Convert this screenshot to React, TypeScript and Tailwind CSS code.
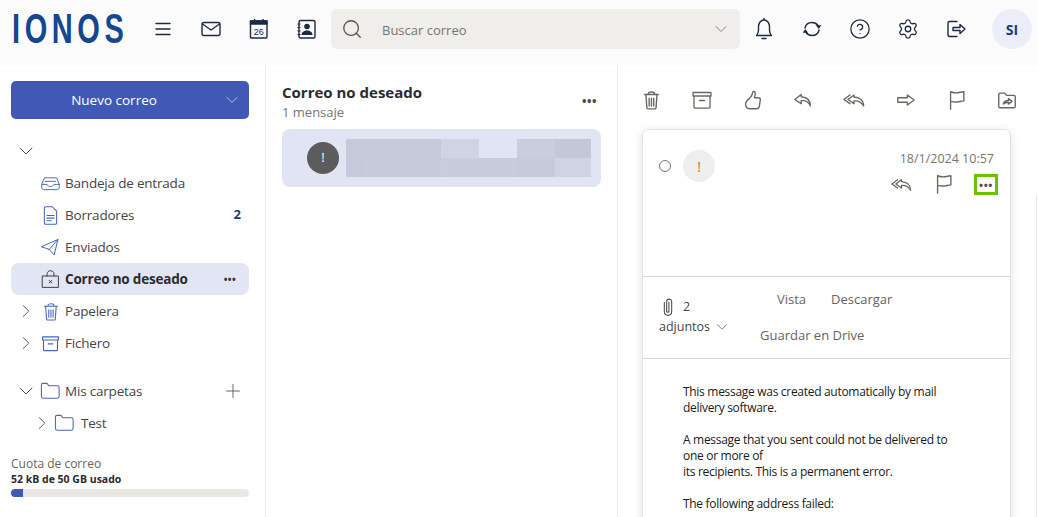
import type { ReactNode } from 'react'
import { ChevronDown, ChevronRight, Plus, Search, Settings, HelpCircle } from 'lucide-react'

const Ico = ({ size = 22, className = '', fill = 'none', sw = 1.5, children }: { size?: number; className?: string; fill?: string; sw?: number; children: ReactNode }) => (
    <svg width={size} height={size} viewBox="0 0 24 24" fill={fill} stroke="currentColor" strokeWidth={sw} strokeLinecap="round" strokeLinejoin="round" className={`shrink-0 ${className}`}>
        {children}
    </svg>
)

const Trash = ({ sw = 1.5, size = 22 }: { sw?: number; size?: number }) => (
    <Ico sw={sw} size={size}>
        <path d="M5 6h15M9 5.500c0-3 7-3 7 0M6.500 6.500l1 14c0 .8.500 1.200 1.200 1.200h7.600c.7 0 1.200-.4 1.200-1.200l1-14M10 10v8.500M12.500 10v8.500M15 10v8.500" />
    </Ico>
)
const Archive = ({ size = 24 }: { size?: number }) => (
    <Ico size={size} sw={1.300}>
        <path d="M3 4.500h18v3.500H3zM4 8v11c0 .7.500 1.200 1.200 1.200h13.600c.7 0 1.200-.5 1.200-1.200V8M9.500 12.500h5" />
    </Ico>
)
const Thumb = () => (
    <Ico>
        <path d="M8 10.500c2-2 3.500-4 3.500-6.500 0-2 3-1.800 3 .8 0 2-.7 3.200-1 4.700h4.500c1.500 0 2 1 2 2l-1 7c-.2 2-1.500 3-3 3H9c-3 0-5-2-5-5s1.500-4.500 4-6z" />
    </Ico>
)
const Reply = () => (
    <Ico>
        <path d="M10 6l-7 5.500 7 4.500v-3.200c4-.4 8 .7 10 5.700 0-6-3.500-9.500-10-10V6z" />
    </Ico>
)
const ReplyAll = ({ size = 22 }: { size?: number }) => (
    <Ico size={size}>
        <path d="M12 6.500l-6.500 5 6.500 4.500v-3c3.500-.3 7.500.7 10.500 5.500 0-6-4.500-9.500-10.500-9.800V6.500zM7.500 6.500l-6.500 5 6.500 4.500" />
    </Ico>
)
const Forward = () => (
    <Ico>
        <path d="M3 9.500h10.500V6.500l7.500 5.500-7.500 5.500v-3H3z" />
    </Ico>
)
const Flag = () => (
    <Ico>
        <path d="M5 22V3c4 1.500 7 1.500 9.500.8 2-.5 3.500-.8 5-.8v10c-2 0-3.500.5-6 1-3 .5-5.500.3-8.500-.5" />
    </Ico>
)

function Logo() {
    return (
        <div className="w-[139px] shrink-0 pl-[12px] text-[#14478f] font-['Liberation_Sans',sans-serif] font-bold text-[29px] leading-none tracking-[4.600px] scale-y-[1.45] origin-center">
            IONOS
        </div>
    )
}

function TopBar() {
    return (
        <header className="h-[65px] pb-[7px] bg-[#fbfbfb] flex items-center shrink-0 text-[#1d2a44]">
            <Logo />
            <div className="flex items-center shrink-0">
                <div className="w-[48px] flex justify-center">
                    <Ico size={24} sw={1.4}>
                        <path d="M5 6.500h14M5 12h14M5 17.500h14" />
                    </Ico>
                </div>
                <div className="w-[48px] flex justify-center">
                    <Ico size={24} sw={1.4}>
                        <rect x="3" y="5.500" width="18" height="13" rx="2" />
                        <path d="M3.500 7l8.500 6 8.500-6" />
                    </Ico>
                </div>
                <div className="w-[48px] flex justify-center">
                    <svg width="24" height="24" viewBox="0 0 24 24" fill="none" stroke="currentColor" strokeWidth="1.4">
                        <rect x="3.500" y="4" width="16.500" height="17" rx="1" />
                        <path d="M3.500 4h16.500v3H3.500z" fill="currentColor" />
                        <path d="M7.500 2v3M16 2v3" />
                        <text x="11.800" y="18" textAnchor="middle" fontSize="9" fill="currentColor" stroke="none" fontFamily="Liberation Sans, sans-serif">26</text>
                    </svg>
                </div>
                <div className="w-[48px] flex justify-center pr-[2px]">
                    <svg width="24" height="24" viewBox="0 0 24 24" fill="none" stroke="currentColor" strokeWidth="1.4">
                        <rect x="5" y="3.500" width="16" height="17.500" rx="1.500" />
                        <circle cx="13" cy="9.500" r="2.800" fill="currentColor" stroke="none" />
                        <path d="M7.500 18c0-3 2.500-4.500 5.500-4.500s5.500 1.500 5.500 4.500z" fill="currentColor" stroke="none" />
                        <path d="M3.500 7h3M3.500 10.500h3M3.500 14h3M3.500 17.500h3" strokeWidth="1.200" />
                    </svg>
                </div>
            </div>
            <div className="w-[409px] shrink-0 h-[40px] bg-[#efeeea] rounded-md flex items-center pl-[10px] pr-[9px]">
                <Search className="w-[22px] h-[22px] text-[#55524d]" strokeWidth={1.4} />
                <span className="ml-[19px] pt-[3px] flex-1 text-[13px] text-[#77746e]">Buscar correo</span>
                <ChevronDown className="w-[20px] h-[20px] text-[#77746e]" strokeWidth={1} />
            </div>
            <div className="flex items-center shrink-0">
                <div className="w-[48px] flex justify-center">
                    <Ico size={24} sw={1.4}>
                        <path d="M4.500 18.500c1.500-1.500 2-3 2-5.500V9.500c0-3.500 2.300-6.500 5.500-6.500s5.500 3 5.500 6.500V13c0 2.500.5 4 2 5.500zM12 1.500v1.500M10 21.500h4" />
                    </Ico>
                </div>
                <div className="w-[48px] flex justify-center">
                    <Ico size={24} sw={1.4}>
                        <path d="M5 11c.7-3.500 3.500-5.500 7-5.500 2.500 0 4.500 1 6 3M19 13c-.7 3.500-3.500 5.500-7 5.500-2.500 0-4.500-1-6-3" />
                        <path d="M18.800 12l-3-3.800h5.500zM5.200 12l3 3.800H2.700z" fill="currentColor" stroke="none" />
                    </Ico>
                </div>
                <div className="w-[48px] flex justify-center">
                    <HelpCircle className="w-[22px] h-[22px]" strokeWidth={1.4} />
                </div>
                <div className="w-[48px] flex justify-center">
                    <Settings className="w-[22px] h-[22px]" strokeWidth={1.4} />
                </div>
                <div className="w-[48px] flex justify-center">
                    <Ico size={24} sw={1.4}>
                        <path d="M13 4.500H5.500C4.500 4.500 4 5 4 6v12c0 1 .5 1.500 1.500 1.500H13M9 10.500h7V7.500l5 4.500-5 4.500v-3H9z" />
                    </Ico>
                </div>
            </div>
            <div className="ml-[12px] w-[40px] h-[40px] shrink-0 rounded-full bg-[#ebeef9] flex items-center justify-center text-[14px] font-bold text-[#24397c]">SI</div>
        </header>
    )
}

const FolderIco = () => (
    <Ico size={23} sw={1.100}>
        <path d="M2.500 5.500c0-1 .6-2 1.600-2h4.200l2 2.500h8.800c1 0 1.900.8 1.900 2v9c0 1.200-.8 2-2 2H4.500c-1.200 0-2-.8-2-2z" />
    </Ico>
)

function Row({ icon, label, chevron, active, right }: { icon: ReactNode; label: string; chevron?: 'right' | 'down'; active?: boolean; right?: ReactNode }) {
    return (
        <div className={`h-[32px] flex items-center rounded-lg pr-[11px] ${active ? 'bg-[#e2e5f3]' : ''}`}>
            <div className="flex justify-center w-[29px] text-[#55524d]">
                {chevron === 'right' && <ChevronRight className="w-[22px] h-[22px]" strokeWidth={1} />}
                {chevron === 'down' && <ChevronDown className="w-[24px] h-[24px]" strokeWidth={1} />}
            </div>
            <div className={`w-[20px] flex justify-center ${active ? 'text-[#37373c]' : 'text-[#4a63bb]'}`}>{icon}</div>
            <span className={`ml-[5px] flex-1 text-[13.500px] tracking-[-0.2px] ${active ? 'font-bold text-[#2b2b30]' : 'text-[#45454a]'}`}>{label}</span>
            {right}
        </div>
    )
}

function Sidebar() {
    return (
        <aside className="w-[266px] shrink-0 border-r border-[#eeeeee] pl-[11px] pr-[16px] pt-[16px] flex flex-col">
            <button className="h-[38px] rounded-[5px] bg-[#4159b4] text-white text-[13.500px] font-medium flex items-center">
                <span className="flex-1 pr-[5px] text-center">Nuevo correo</span>
                <ChevronDown className="w-[20px] h-[20px] mr-[7px] text-[#c9d2f0]" strokeWidth={1} />
            </button>
            <div className="h-[17px]" />
            <div className="h-[30px] pl-[3px] flex items-center text-[#55524d]">
                <ChevronDown className="w-[24px] h-[24px]" strokeWidth={1} />
            </div>
            <div className="h-[1px]" />
            <Row
                label="Bandeja de entrada"
                icon={
                    <Ico size={21} sw={1.100}>
                        <path d="M2 13l3-7.500h14L22 13v4c0 1.200-.8 2-2 2H4c-1.200 0-2-.8-2-2zM2 13h6c.5 1.500 2 2.500 4 2.500s3.500-1 4-2.500h6M6 9.500h12" />
                    </Ico>
                }
            />
            <Row
                label="Borradores"
                right={<span className="text-[13px] font-bold text-[#24397c] mr-[-3px]">2</span>}
                icon={
                    <Ico size={21} sw={1.200}>
                        <path d="M5 3.500c0-.8.500-1.500 1.500-1.500H14l5 5v13.500c0 .8-.5 1.500-1.500 1.500h-11c-1 0-1.500-.7-1.500-1.500zM8 12h8M8 15h8M8 18h5" />
                    </Ico>
                }
            />
            <Row
                label="Enviados"
                icon={
                    <Ico size={20} sw={1.200}>
                        <path d="M2 11.500L21.500 3 17 21.500l-6-6.500zM11 15L21.500 3" />
                    </Ico>
                }
            />
            <Row
                active
                label="Correo no deseado"
                right={<span className="text-[#37373c] font-bold text-[10px] tracking-[0.3px] mr-[2px] leading-none">•••</span>}
                icon={
                    <Ico size={21} sw={1.100}>
                        <path d="M3 8h18v13H3zM8 8V5.500c0-2 2-3.500 4-3.500s4 1.500 4 3.500V8M10.500 13l3 3M13.500 13l-3 3" />
                    </Ico>
                }
            />
            <Row chevron="right" label="Papelera" icon={<Trash sw={1.200} size={21} />} />
            <Row chevron="right" label="Fichero" icon={<Archive size={21} />} />
            <div className="h-[16px]" />
            <Row chevron="down" label="Mis carpetas" icon={<FolderIco />} right={<Plus className="w-[22px] h-[22px] text-[#6b675f] mr-[-6px]" strokeWidth={1.100} />} />
            <div className="h-[32px] flex items-center pl-[20px]">
                <ChevronRight className="w-[22px] h-[22px] text-[#55524d]" strokeWidth={1} />
                <div className="text-[#4a63bb]"><FolderIco /></div>
                <span className="ml-[5px] text-[13.500px] tracking-[-0.2px] text-[#45454a]">Test</span>
            </div>
            <div className="mt-[17px] text-[12px] leading-[16px] text-[#66635e]">Cuota de correo</div>
            <div className="text-[10.500px] leading-[14px] font-bold text-[#2b2b30]">52 kB de 50 GB usado</div>
            <div className="mt-[3px] h-[8px] rounded-full bg-[#e8e7e2] overflow-hidden">
                <div className="h-full w-[12px] bg-[#4159b4]" />
            </div>
        </aside>
    )
}

const blurTop = ['bg-[#c5c9da]', 'bg-[#c5c9da]', 'bg-[#cfd3e2]', 'bg-[#e1e5f3]', 'bg-[#c9cddd]', 'bg-[#c3c7d8]']
const blurBottom = ['bg-[#c5c9da]', 'bg-[#c6cadb]', 'bg-[#c9cddb]', 'bg-[#c8ccdb]', 'bg-[#c6cada]', 'bg-[#cfd3e2]']

function MessageList() {
    return (
        <section className="w-[352px] shrink-0 border-r border-[#eeeeee] pl-[16px] pr-[16px]">
            <div className="h-[64px] flex pt-[16px] pr-[4px] justify-between">
                <div>
                    <div className="text-[15px] leading-[22px] font-bold text-[#2b2b30]">Correo no deseado</div>
                    <div className="text-[13px] leading-[18px] text-[#77746e]">1 mensaje</div>
                </div>
                <span className="text-[#4a4a4a] font-bold text-[12px] leading-none tracking-[0.5px] mt-[15px]">•••</span>
            </div>
            <div className="h-[58px] rounded-lg bg-[#e1e5f3] flex items-center pl-[25px]">
                <div className="w-[32px] h-[32px] rounded-full bg-[#5c5c5c] text-white text-[13px] font-medium flex items-center justify-center">!</div>
                <div className="ml-[7px] w-[245px] h-[38px] grid grid-cols-[19px_76px_38px_38px_38px_36px] grid-rows-2">
                    {blurTop.map((c, i) => <div key={i} className={c} />)}
                    {blurBottom.map((c, i) => <div key={i} className={c} />)}
                </div>
            </div>
        </section>
    )
}

function Reader() {
    return (
        <section className="flex-1 min-w-0 relative">
            <div className="h-[64px] pt-[6px] pl-[8px] flex items-center text-[#6b675f]">
                {[<Trash />, <Archive />, <Thumb />, <Reply />, <ReplyAll />].map((icon, i) => (
                    <div key={i} className="w-[50.700px] flex justify-center">{icon}</div>
                ))}
                <div className="w-[50.700px] pl-[3px] flex justify-center"><Forward /></div>
                <div className="w-[50.700px] pl-[3px] flex justify-center"><Flag /></div>
                <div className="w-[50.700px] pl-[1px] flex justify-center">
                    <Ico>
                        <path d="M3 19V6c0-1 .5-1.500 1.500-1.500h5l2 2.500h8c1 0 1.500.5 1.500 1.500V19c0 1-.5 1.500-1.500 1.500h-15C3.500 20.500 3 20 3 19zM8 16.500c.5-2.500 2.500-4 5.500-4V10.500l4 3-4 3V14.500c-2 0-4 .5-5.500 2z" />
                    </Ico>
                </div>
            </div>
            <div className="ml-[24px] w-[369px] h-[600px] rounded-t-md border border-[#e2e2e2] shadow-[0_2px_10px_rgba(0,0,0,0.12)] bg-white">
                <div className="h-[147px] flex pl-[16px] pr-[16px] pt-[20px] border-b border-[#d9d9d9]">
                    <div className="w-[12px] h-[12px] mt-[10px] rounded-full border border-[#77746e]" />
                    <div className="ml-[12px] w-[32px] h-[32px] rounded-full bg-[#eeeeee] flex items-center justify-center text-[14px] font-medium text-[#c8701c]">!</div>
                    <div className="flex-1 flex flex-col items-end">
                        <div className="text-[12.500px] leading-[18px] text-[#77746e]">18/1/2024 10:57</div>
                        <div className="flex items-center mt-[5px] text-[#6b675f] mr-[-4px]">
                            <ReplyAll size={21} />
                            <div className="ml-[21px]"><Flag /></div>
                            <div className="ml-[19px] w-[24px] h-[21px] border-[3px] border-[#6cc000] flex items-center justify-center text-[#55524d] text-[11px] font-bold leading-none tracking-[0.5px]">•••</div>
                        </div>
                    </div>
                </div>
                <div className="h-[82px] flex border-b border-[#d9d9d9] pl-[16px]">
                    <div className="w-[72px] pt-[20px] text-[#45454a] text-[12.500px]">
                        <div className="flex items-center h-[20px]">
                            <Ico size={22} sw={1.200} className="text-[#55524d] ml-[-2px]">
                                <path d="M8 7v10c0 5.500 8 5.500 8 0V6c0-3.500-5.500-3.500-5.500 0v10.500c0 1.500 2.500 1.500 2.500 0V7" />
                            </Ico>
                            <span className="ml-[4px] pt-[1px] text-[12.500px]">2</span>
                        </div>
                        <div className="flex items-center mt-[1px] whitespace-nowrap">
                            adjuntos
                            <ChevronDown className="w-[18px] h-[18px] ml-[3px] text-[#55524d] shrink-0" strokeWidth={1} />
                        </div>
                    </div>
                    <div className="ml-[29px] text-[13px] text-[#66635e]">
                        <div className="pt-[13px] pl-[17px] flex gap-[25px] h-[41px]">
                            <span>Vista</span>
                            <span>Descargar</span>
                        </div>
                        <div className="pt-[8px]">Guardar en Drive</div>
                    </div>
                </div>
                <div className="pt-[25px] pl-[40px] text-[12px] leading-[16px] tracking-[-0.3px] text-[#1a1a1a]">
                    This message was created automatically by mail<br />
                    delivery software.<br />
                    <br />
                    A message that you sent could not be delivered to<br />
                    one or more of<br />
                    its recipients. This is a permanent error.<br />
                    <br />
                    The following address failed:
                </div>
            </div>
            <div className="absolute right-[1px] top-[130px] bottom-0 w-[1px] bg-[#e5e5e5]" />
        </section>
    )
}

export default function App() {
    return (
        <div className="w-[1038px] h-[517px] overflow-hidden bg-white flex flex-col font-['Open_Sans',sans-serif]">
            <TopBar />
            <div className="flex flex-1 min-h-0">
                <Sidebar />
                <MessageList />
                <Reader />
            </div>
        </div>
    )
}
